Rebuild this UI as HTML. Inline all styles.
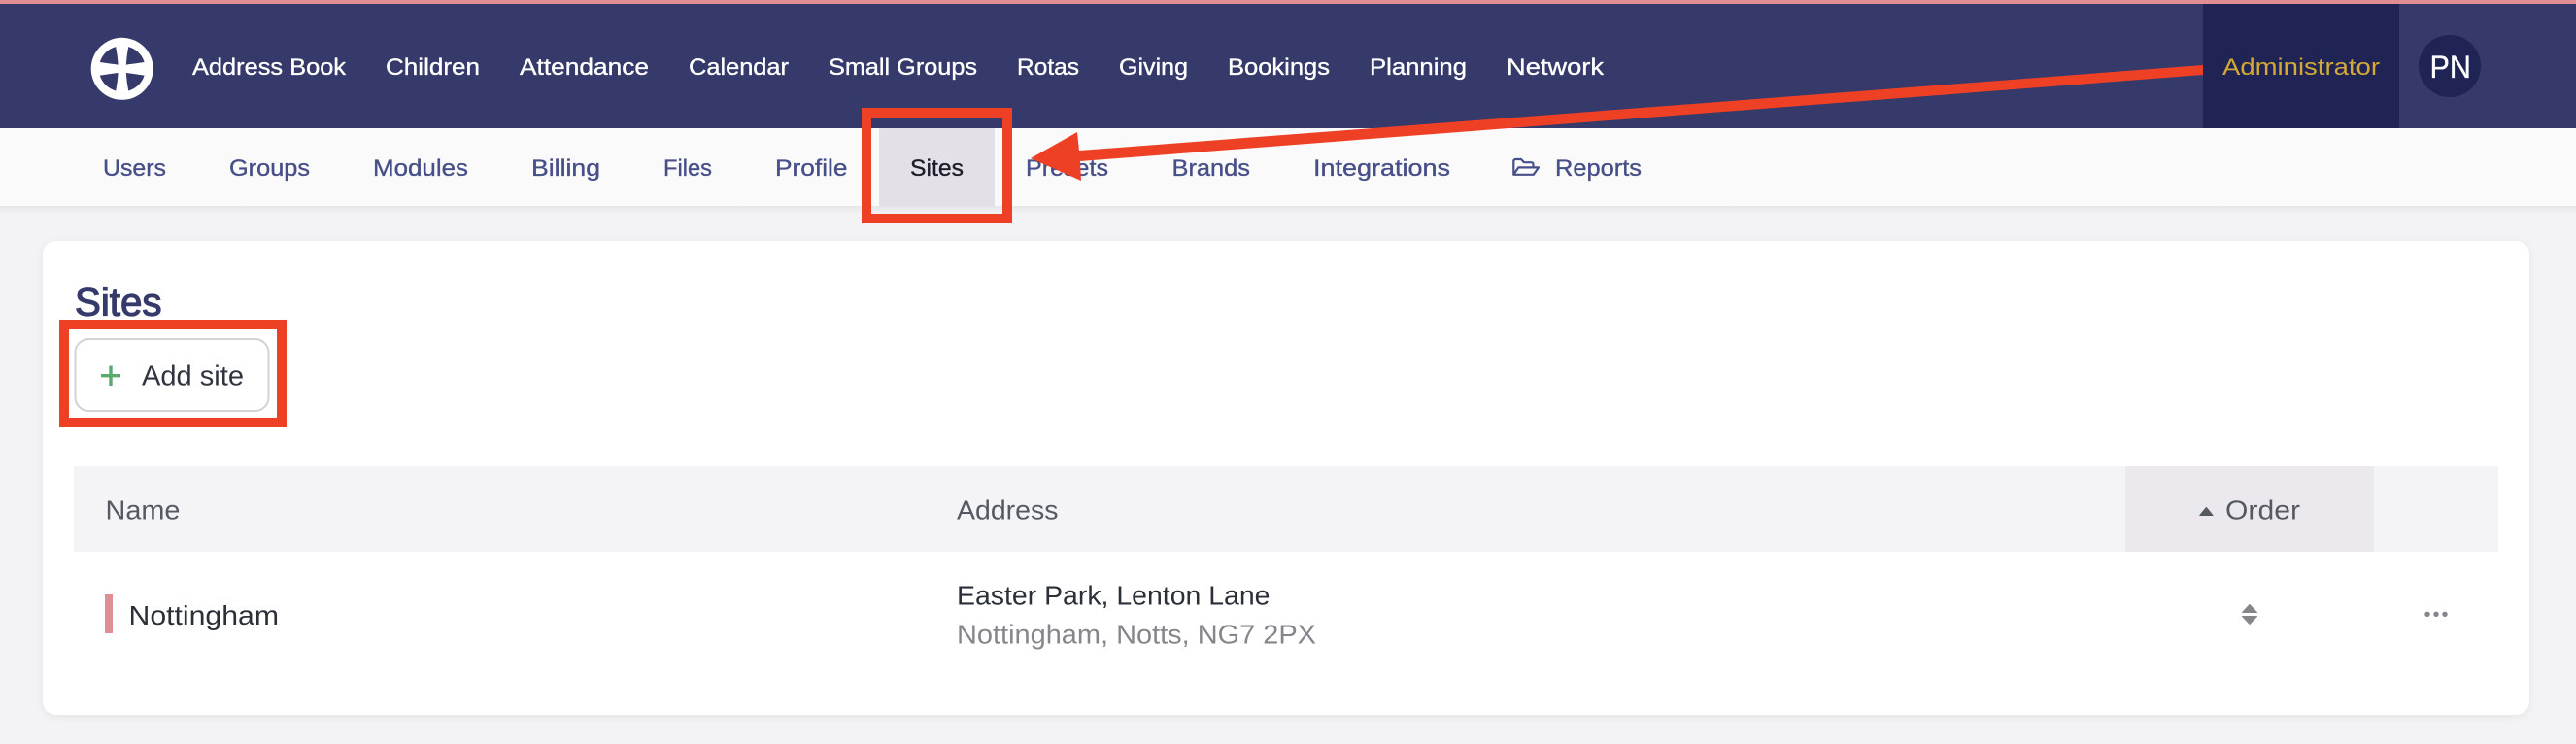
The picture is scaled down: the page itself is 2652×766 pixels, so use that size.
<!DOCTYPE html>
<html lang="en">
<head>
<meta charset="utf-8">
<title>Sites</title>
<style>
html,body{margin:0;padding:0;width:2652px;height:766px;overflow:hidden;background:#f3f3f5}
svg{display:block}
text{font-family:"Liberation Sans",Arial,sans-serif}
.nav{font-size:24px;fill:#fff;stroke:#fff;stroke-width:.35px}
.sub{font-size:24px;fill:#474f88;stroke:#474f88;stroke-width:.35px}
.th{font-size:28px;fill:#555a62}
.td{font-size:28px;fill:#2a2f38}
</style>
</head>
<body>
<svg xmlns="http://www.w3.org/2000/svg" width="2652" height="766" viewBox="0 0 2652 766">
<defs>
<linearGradient id="sh" x1="0" y1="0" x2="0" y2="1"><stop offset="0" stop-color="#e6e5ea"/><stop offset="1" stop-color="#f3f3f5"/></linearGradient>
<filter id="cs" x="-2%" y="-5%" width="104%" height="110%"><feDropShadow dx="0" dy="2" stdDeviation="4" flood-color="#000" flood-opacity=".06"/></filter>
</defs>
<rect width="2652" height="766" fill="#f3f3f5"/>
<rect width="2652" height="4" fill="#e08e94"/>
<rect y="4" width="2652" height="128" fill="#353a6b"/>
<rect y="132" width="2652" height="80" fill="#fafafa"/>
<rect y="212" width="2652" height="8" fill="url(#sh)"/>

<!-- logo -->
<g transform="translate(125.7 70.8)">
<circle r="32" fill="#fff"/>
<g fill="#353a6b">
<path d="M-6.5-22.7A23.6 23.6 0 0 0-22.9-6.8Q-12-5.2-4.1-4.2Q-4.6-13-6.5-22.7Z"/>
<path transform="scale(-1 1)" d="M-6.5-22.7A23.6 23.6 0 0 0-22.9-6.8Q-12-5.2-4.1-4.2Q-4.6-13-6.5-22.7Z"/>
<path transform="scale(1 -1)" d="M-6.5-22.7A23.6 23.6 0 0 0-22.9-6.8Q-12-5.2-4.1-4.2Q-4.6-13-6.5-22.7Z"/>
<path transform="scale(-1 -1)" d="M-6.5-22.7A23.6 23.6 0 0 0-22.9-6.8Q-12-5.2-4.1-4.2Q-4.6-13-6.5-22.7Z"/>
</g>
</g>

<!-- main nav -->
<g class="nav">
<text class="nav" x="198" y="77" textLength="158" lengthAdjust="spacingAndGlyphs">Address Book</text>
<text class="nav" x="397" y="77" textLength="97" lengthAdjust="spacingAndGlyphs">Children</text>
<text class="nav" x="535" y="77" textLength="133" lengthAdjust="spacingAndGlyphs">Attendance</text>
<text class="nav" x="709" y="77" textLength="103" lengthAdjust="spacingAndGlyphs">Calendar</text>
<text class="nav" x="853" y="77" textLength="153" lengthAdjust="spacingAndGlyphs">Small Groups</text>
<text class="nav" x="1047" y="77" textLength="64" lengthAdjust="spacingAndGlyphs">Rotas</text>
<text class="nav" x="1152" y="77" textLength="71" lengthAdjust="spacingAndGlyphs">Giving</text>
<text class="nav" x="1264" y="77" textLength="105" lengthAdjust="spacingAndGlyphs">Bookings</text>
<text class="nav" x="1410" y="77" textLength="100" lengthAdjust="spacingAndGlyphs">Planning</text>
<text class="nav" x="1551" y="77" textLength="100" lengthAdjust="spacingAndGlyphs">Network</text>
</g>

<!-- sub nav -->
<rect x="905" y="132" width="119" height="80" fill="#e3e1e7"/>
<text class="sub" x="106" y="181" textLength="65" lengthAdjust="spacingAndGlyphs">Users</text>
<text class="sub" x="236" y="181" textLength="83" lengthAdjust="spacingAndGlyphs">Groups</text>
<text class="sub" x="384" y="181" textLength="98" lengthAdjust="spacingAndGlyphs">Modules</text>
<text class="sub" x="547" y="181" textLength="71" lengthAdjust="spacingAndGlyphs">Billing</text>
<text class="sub" x="683" y="181" textLength="50" lengthAdjust="spacingAndGlyphs">Files</text>
<text class="sub" x="798" y="181" textLength="74.5" lengthAdjust="spacingAndGlyphs">Profile</text>
<text x="937" y="181" font-size="24" fill="#1c1c2a" stroke="#1c1c2a" stroke-width=".35" textLength="55" lengthAdjust="spacingAndGlyphs">Sites</text>
<text class="sub" x="1056" y="181" textLength="85" lengthAdjust="spacingAndGlyphs">Presets</text>
<text class="sub" x="1206.5" y="181" textLength="80.5" lengthAdjust="spacingAndGlyphs">Brands</text>
<text class="sub" x="1352" y="181" textLength="141" lengthAdjust="spacingAndGlyphs">Integrations</text>
<path d="M1558.3 179.8V166a2 2 0 0 1 2-2h5.7l3 3.2h7.5a2 2 0 0 1 2 2V172M1558.3 179.8L1563.3 172.4H1584L1578.8 179.8Z" fill="none" stroke="#474f88" stroke-width="2.2" stroke-linejoin="round"/>
<text class="sub" x="1601" y="181" textLength="89" lengthAdjust="spacingAndGlyphs">Reports</text>

<!-- admin + avatar -->
<rect x="2268" y="4" width="202" height="128" fill="#1f2454"/>
<text x="2288" y="77" font-size="24" fill="#d4a937" textLength="162" lengthAdjust="spacingAndGlyphs">Administrator</text>
<circle cx="2522" cy="68" r="32" fill="#1f2454"/>
<text x="2501.5" y="80" font-size="32" fill="#fff" stroke="#fff" stroke-width=".3" textLength="42.5" lengthAdjust="spacingAndGlyphs">PN</text>

<!-- card -->
<rect x="44" y="248" width="2560" height="488" rx="14" fill="#fff" filter="url(#cs)"/>
<text x="77" y="324.5" font-size="40" fill="#353a6b" stroke="#353a6b" stroke-width="1.2" textLength="89.5" lengthAdjust="spacingAndGlyphs">Sites</text>

<!-- add button -->
<rect x="77.5" y="349" width="199" height="74" rx="14" fill="#fff" stroke="#d2d2d7" stroke-width="2"/>
<path d="M114 376.5V397M104 386.7H124" stroke="#5aa96f" stroke-width="3.4" fill="none"/>
<text x="146" y="396.5" font-size="29" fill="#2f3440" textLength="105" lengthAdjust="spacingAndGlyphs">Add site</text>

<!-- table head -->
<rect x="76" y="480" width="2496" height="88" fill="#f4f3f6"/>
<rect x="2188" y="480" width="256" height="88" fill="#ece9ee"/>
<text class="th" x="108.5" y="534.5" textLength="77" lengthAdjust="spacingAndGlyphs">Name</text>
<text class="th" x="985" y="534.5" textLength="104.5" lengthAdjust="spacingAndGlyphs">Address</text>
<path d="M2271.4 522.5L2278 530.5H2264.8Z" fill="#555a62" stroke="#555a62" stroke-width="1" stroke-linejoin="round"/>
<text class="th" x="2291" y="534.5" textLength="77" lengthAdjust="spacingAndGlyphs">Order</text>

<!-- row -->
<rect x="108" y="612" width="8" height="40" fill="#de8f94"/>
<text class="td" x="132.5" y="643" textLength="154.5" lengthAdjust="spacingAndGlyphs">Nottingham</text>
<text class="td" x="985" y="622.7" textLength="322.5" lengthAdjust="spacingAndGlyphs">Easter Park, Lenton Lane</text>
<text x="985" y="662.7" font-size="28" fill="#85868c" textLength="370" lengthAdjust="spacingAndGlyphs">Nottingham, Notts, NG7 2PX</text>
<path d="M2316 622.5L2323.5 630.5H2308.5ZM2316 642.5L2323.5 634.5H2308.5Z" fill="#85868c" stroke="#85868c" stroke-width="1" stroke-linejoin="round"/>
<circle cx="2499" cy="632.3" r="2.7" fill="#85868c"/>
<circle cx="2508" cy="632.3" r="2.7" fill="#85868c"/>
<circle cx="2517" cy="632.3" r="2.7" fill="#85868c"/>

<!-- annotations -->
<rect x="892" y="116" width="145" height="109" fill="none" stroke="#ee4025" stroke-width="10"/>
<rect x="66" y="334" width="224" height="101" fill="none" stroke="#ee4025" stroke-width="10"/>
<path d="M2268 67V77L1112 166L1113 186L1061 163L1109 136L1111 155Z" fill="#ee4025"/>
</svg>
</body>
</html>
